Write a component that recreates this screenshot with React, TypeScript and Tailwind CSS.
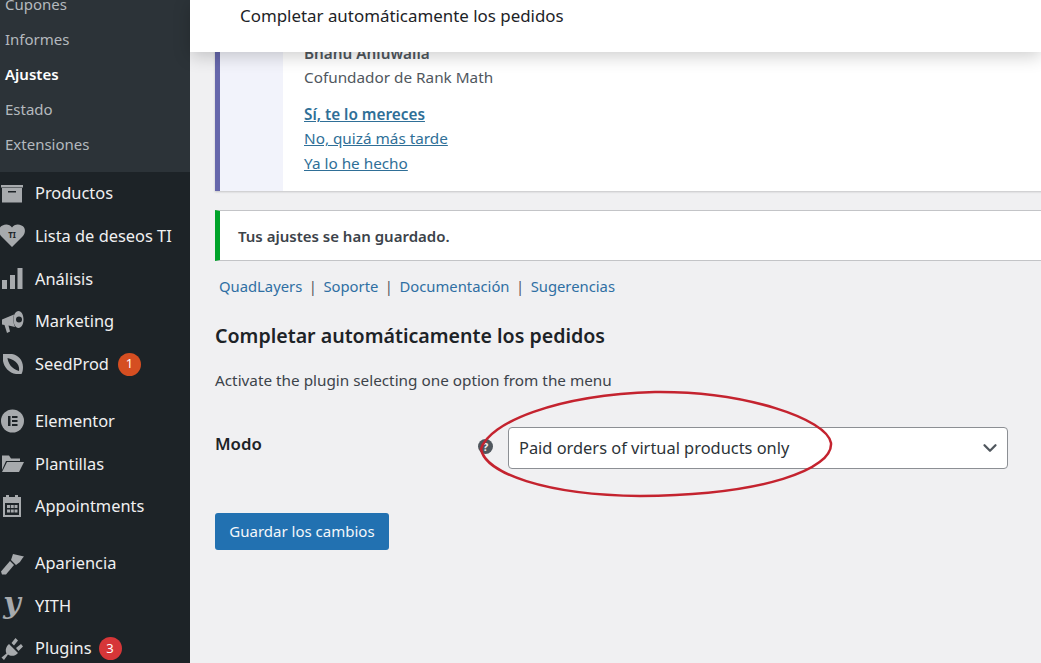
import React from 'react';
import { ChevronDown } from 'lucide-react';

const subItems = [
  { label: 'Cupones' },
  { label: 'Informes' },
  { label: 'Ajustes', active: true },
  { label: 'Estado' },
  { label: 'Extensiones' },
];

const ProductsIcon = () => (
  <svg viewBox="0 0 24 24" className="h-[24px] w-[24px] fill-[#a7aaad]">
    <path d="M1 3h22v2.500H1z" />
    <path fillRule="evenodd" d="M2 6h20v14.500H2zM8 9v1.500h8V9z" />
  </svg>
);

const HeartIcon = () => (
  <svg viewBox="0 0 26 24" className="-ml-[1px] h-[24px] w-[26px]">
    <path className="fill-[#a7aaad]" d="M13 23 2 12C-1 8-.5 3 3.500 1.500 7-.5 11 .5 13 3.500 15 .5 19-.5 22.500 1.500 26.500 3 27 8 24 12z" />
    <text x="13" y="13.500" textAnchor="middle" className="fill-[#1d2327] text-[8px] font-bold">TI</text>
  </svg>
);

const ChartIcon = () => (
  <svg viewBox="0 0 24 24" className="h-[24px] w-[24px] fill-[#a7aaad]">
    <path d="M2 13h5v9H2zM10 8h5v14h-5zM17.500 1h5v21h-5z" />
  </svg>
);

const MegaphoneIcon = () => (
  <svg viewBox="0 0 24 24" className="h-[24px] w-[24px] fill-[#a7aaad]">
    <path d="M2 9.500 14 4.500C13 8 13 13 15 17L8.500 15.500 10 21.500 7 23 4.500 15 2 14.500z" />
    <path fillRule="evenodd" d="M18.500 1C21.500 1 23.500 5 23.500 9.500S21.500 18 18.500 18 13.500 14 13.500 9.500 15.500 1 18.500 1zM19 6.500a3 3 0 1 0 0 6 3 3 0 0 0 0-6z" />
  </svg>
);

const LeafIcon = () => (
  <svg viewBox="0 0 24 24" className="h-[24px] w-[24px] fill-[#a7aaad]">
    <path fillRule="evenodd" d="M3 2h9c6 1 11 6 11 13 0 3-.5 5-1.500 7H16C9 21 4 15 3 9zM7.500 6c.5 5 4 11 11.500 13 1-5-2-11-11.500-13z" />
  </svg>
);

const ElementorIcon = () => (
  <svg viewBox="0 0 24 24" className="h-[24px] w-[24px]">
    <circle cx="12.500" cy="12" r="11.500" className="fill-[#a7aaad]" />
    <path className="fill-[#1d2327]" d="M8 7h2.500v10H8zM12 7h5.500v2H12zM12 11h5.500v2H12zM12 15h5.500v2H12z" />
  </svg>
);

const FolderIcon = () => (
  <svg viewBox="0 0 24 24" className="h-[24px] w-[24px] fill-[#a7aaad]">
    <path d="M2 3.500h7l2 3h9v2.500H6L2 18z" />
    <path d="M7 10h17l-5 10H2z" />
  </svg>
);

const CalendarIcon = () => (
  <svg viewBox="0 0 24 24" className="h-[24px] w-[24px] fill-[#a7aaad]">
    <path fillRule="evenodd" d="M3 3h3V1h3v2h6V1h3v2h3v20H3zM5 9v12h14V9z" />
    <path d="M7 11h3v3H7zM10.750 11h3v3h-3zM14.500 11h3v3h-3zM7 15.500h3v3H7zM10.750 15.500h3v3h-3zM14.500 15.500h3v3h-3z" />
  </svg>
);

const BrushIcon = () => (
  <svg viewBox="0 0 24 24" className="h-[24px] w-[24px] fill-[#a7aaad]">
    <path d="M13 2 24 4.500c-2 2-3 4-4 5.500l-4 3-5-5z" />
    <path d="M10 9l4 4-8 9.500H2l-1-3z" />
  </svg>
);

const YithIcon = () => (
  <span className="block w-[24px] pb-[6px] text-center font-['DejaVu_Serif',serif] text-[30px] leading-[24px] font-bold text-[#a7aaad] italic">y</span>
);

const PluginIcon = () => (
  <svg viewBox="0 0 24 24" className="h-[24px] w-[24px] fill-[#a7aaad]">
    <path d="M9 7l9 9c-3 3.500-7.500 3.500-10 1.500L4 23l-2.500-2.500 5-4C5 13 6 9.500 9 7z" />
    <path d="M11.500 6l4-5 2.500 2.500-4 5zM16 11l5-4 2 2.500-4.500 4.500z" />
  </svg>
);

const menuGroups = [
  [
    { label: 'Productos', icon: <ProductsIcon /> },
    { label: 'Lista de deseos TI', icon: <HeartIcon /> },
    { label: 'Análisis', icon: <ChartIcon /> },
    { label: 'Marketing', icon: <MegaphoneIcon /> },
    { label: 'SeedProd', icon: <LeafIcon />, badge: '1', badgeClass: 'ml-[9px] bg-[#d54e21]' },
  ],
  [
    { label: 'Elementor', icon: <ElementorIcon /> },
    { label: 'Plantillas', icon: <FolderIcon /> },
    { label: 'Appointments', icon: <CalendarIcon /> },
  ],
  [
    { label: 'Apariencia', icon: <BrushIcon /> },
    { label: 'YITH', icon: <YithIcon /> },
    { label: 'Plugins', icon: <PluginIcon />, badge: '3', badgeClass: 'ml-[7px] bg-[#d63638]' },
  ],
];

function Sidebar() {
  return (
    <aside className="flex w-[190px] shrink-0 flex-col bg-[#1d2327]">
      <ul className="-mt-[13px] bg-[#2c3338] pb-[10px]">
        {subItems.map((item) => (
          <li
            key={item.label}
            className={`flex h-[35px] items-center pl-[5px] text-[15px] ${item.active ? 'font-semibold text-white' : 'text-[#b4b9be]'}`}
          >
            {item.label}
          </li>
        ))}
      </ul>
      <div className="flex flex-col gap-[14.500px] pt-[0.500px]">
        {menuGroups.map((group, i) => (
          <ul key={i}>
            {group.map((item) => (
              <li key={item.label} className="flex h-[42.600px] items-center text-[16.400px] text-[#f0f0f1]">
                <span className="flex w-[35px] shrink-0 items-center">{item.icon}</span>
                <span>{item.label}</span>
                {item.badge && (
                  <span className={`flex h-[23px] w-[23px] items-center justify-center rounded-full text-[13px] text-white ${item.badgeClass}`}>
                    {item.badge}
                  </span>
                )}
              </li>
            ))}
          </ul>
        ))}
      </div>
    </aside>
  );
}

function RankMathNotice() {
  return (
    <div className="-mr-[10px] flex h-[191px] border-l-[5px] border-[#6667ab] bg-white shadow-[0_1px_2px_rgba(0,0,0,0.18)]">
      <div className="w-[63px] shrink-0 bg-[#f2f3fb]" />
      <div className="flex flex-col justify-end pb-[16px] pl-[21px] text-[15.300px] text-[#50575e]">
        <p className="leading-[24px] font-semibold">Bhanu Ahluwalia</p>
        <p className="leading-[24px]">Cofundador de Rank Math</p>
        <a className="mt-[13px] leading-[24px] font-semibold text-[#2f6f97] underline">Sí, te lo mereces</a>
        <a className="leading-[25px] text-[#2f6f97] underline">No, quizá más tarde</a>
        <a className="leading-[24px] text-[#2f6f97] underline">Ya lo he hecho</a>
      </div>
    </div>
  );
}

function SavedNotice() {
  return (
    <div className="mt-[19px] -mr-[10px] flex h-[51px] items-center border-y border-l-[5px] border-y-[#c3c4c7] border-l-[#00a32a] bg-white pt-[2px] pl-[18px] text-[15px] font-semibold text-[#3c434a]">
      Tus ajustes se han guardado.
    </div>
  );
}

function PluginLinks() {
  const links = ['QuadLayers', 'Soporte', 'Documentación', 'Sugerencias'];
  return (
    <div className="mt-[14px] flex h-[22px] items-center pl-[4px] text-[14.800px] text-[#50575e]">
      {links.map((link, i) => (
        <React.Fragment key={link}>
          {i > 0 && <span className="px-[6.500px]">|</span>}
          <a className="text-[#2f6fa3]">{link}</a>
        </React.Fragment>
      ))}
    </div>
  );
}

function SettingsForm() {
  return (
    <div>
      <h2 className="mt-[17px] text-[19.600px] leading-[44px] font-semibold text-[#1d2327]">Completar automáticamente los pedidos</h2>
      <p className="mt-[11px] text-[15.300px] leading-[22px] text-[#3c434a]">Activate the plugin selecting one option from the menu</p>
      <div className="mt-[36px] flex h-[42px] items-center">
        <label className="mb-[8px] w-[263px] text-[16.800px] font-semibold text-[#1d2327]">Modo</label>
        <span className="mt-[-3px] flex h-[15px] w-[15px] items-center justify-center rounded-full bg-[#50575e] text-[11px] leading-none font-bold text-[#f0f0f1]">?</span>
        <div className="ml-[15px] flex h-[42px] w-[500px] items-center justify-between rounded-[4px] border border-[#8c8f94] bg-white pr-[6px] pl-[10px] text-[16.400px] text-[#2c3338]">
          <span>Paid orders of virtual products only</span>
          <ChevronDown className="h-[22px] w-[22px] text-[#50575e]" strokeWidth={2.5} />
        </div>
      </div>
      <button className="mt-[44px] h-[37px] w-[174px] rounded-[3px] bg-[#2271b1] text-[15px] text-[#f4f7fa]">Guardar los cambios</button>
    </div>
  );
}

export default function App() {
  return (
    <div className="relative flex h-[663px] w-[1041px] overflow-hidden bg-[#f0f0f2] font-['Noto_Sans',sans-serif]">
      <Sidebar />
      <main className="min-w-0 flex-1 pl-[25px]">
        <RankMathNotice />
        <SavedNotice />
        <PluginLinks />
        <SettingsForm />
      </main>
      <div className="absolute top-0 right-0 left-[190px] flex h-[52px] items-center bg-white pb-[20px] pl-[50px] text-[16.900px] text-[#1d2327] shadow-[0_4px_18px_rgba(0,0,0,0.2)]">
        Completar automáticamente los pedidos
      </div>
      <svg className="pointer-events-none absolute top-[385px] left-[475px] h-[120px] w-[365px]" viewBox="0 0 365 120" fill="none">
        <path
          d="M6 64C14 38 80 10 180 7 270 6 352 34 356 58 358 84 290 110 165 111 70 110 10 88 6 64Z"
          className="stroke-[#c4232f]"
          strokeWidth="2.500"
        />
      </svg>
    </div>
  );
}
